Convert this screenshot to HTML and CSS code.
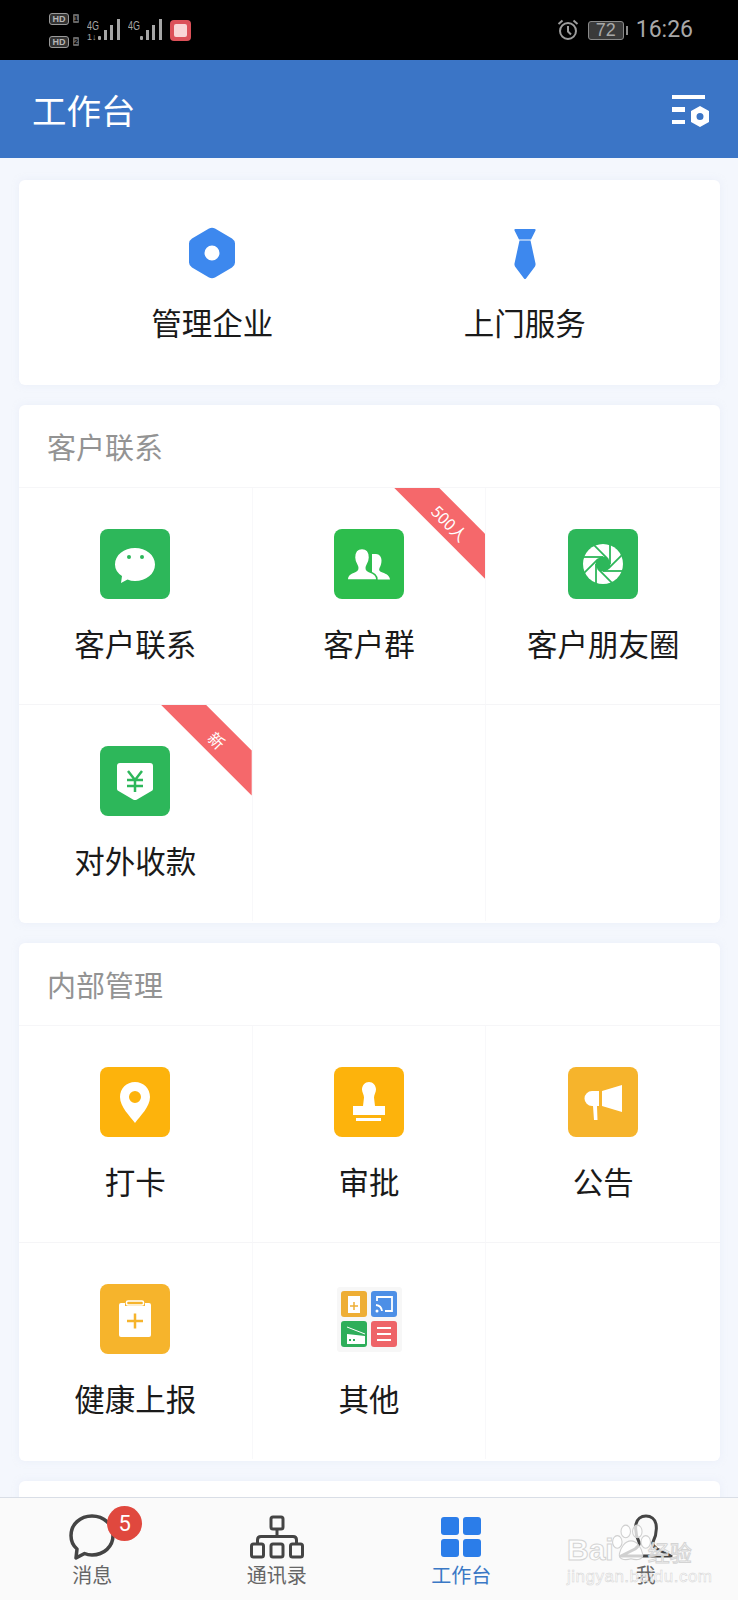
FILE: index.html
```html
<!DOCTYPE html>
<html lang="zh-CN">
<head>
    <meta charset="UTF-8">
    <meta name="viewport" content="width=device-width, initial-scale=1.0">
    <title>工作台</title>
    <link rel="stylesheet" href="styles.css">
</head>
<body>
    <!-- Status bar -->
    <div class="status-bar">
        <div class="status-left">
            <div class="sim-tags">
                <div class="sim-row"><span class="hd">HD</span><span class="sim-no">1</span></div>
                <div class="sim-row"><span class="hd">HD</span><span class="sim-no">2</span></div>
            </div>
            <svg class="signal" width="34" height="22" viewBox="0 0 34 22">
                <text x="0" y="11" class="signal-text" textLength="12" lengthAdjust="spacingAndGlyphs">4G</text>
                <text x="0" y="21" class="signal-sub">1↓</text>
                <rect x="11" y="17" width="3" height="4" rx="1"/>
                <rect x="17" y="11" width="3" height="10"/>
                <rect x="23" y="6" width="3" height="15"/>
                <rect x="30" y="0" width="3" height="21"/>
            </svg>
            <svg class="signal" width="34" height="22" viewBox="0 0 34 22">
                <text x="0" y="11" class="signal-text" textLength="12" lengthAdjust="spacingAndGlyphs">4G</text>
                <rect x="12" y="17" width="3" height="4" rx="1"/>
                <rect x="18" y="11" width="3" height="10"/>
                <rect x="24" y="6" width="3" height="15"/>
                <rect x="31" y="0" width="3" height="21"/>
            </svg>
            <span class="app-dot"><span></span></span>
        </div>
        <div class="status-right">
            <svg width="22" height="22" viewBox="0 0 22 22" fill="none" stroke="#9c9c9c" stroke-width="2">
                <circle cx="11" cy="12" r="8"/>
                <path d="M11 7v5.500l3 3M1.500 5l4-3.500M20.500 5l-4-3.500"/>
            </svg>
            <span class="battery"><span class="battery-body">72</span><span class="battery-cap"></span></span>
            <span class="clock">16:26</span>
        </div>
    </div>

    <!-- Header -->
    <header class="app-header">
        <h1>工作台</h1>
        <svg width="38" height="32" viewBox="0 0 38 32">
            <path fill="#fff" d="M0 0h33v4H0zM0 12h13v5H0zM0 25h13v4H0z"/>
            <path fill="#fff" fill-rule="evenodd" d="M28 11l9 5v11l-9 5-9-5V16zM28 18a3.500 3.500 0 1 0 0 7 3.500 3.500 0 1 0 0-7z"/>
        </svg>
    </header>

    <main class="content">
        <section class="card card-top">
            <div class="top-item">
                <svg width="46" height="52" viewBox="0 0 46 52">
                    <path fill="#3d88ee" fill-rule="evenodd" d="M20 1.500q3-1.500 6 0l17 10q3 2 3 5v19q0 3-3 5l-17 10q-3 1.500-6 0l-17-10q-3-2-3-5v-19q0-3 3-5zM23 18.500a7.500 7.500 0 1 0 0 15 7.500 7.500 0 1 0 0-15z"/>
                </svg>
                <span>管理企业</span>
            </div>
            <div class="top-item">
                <svg width="46" height="52" viewBox="0 0 46 52">
                    <path fill="#3d88ee" d="M13.500 2h19q1.500 0 1 1.500l-4.500 9h-12l-4.500-9q-.5-1.500 1-1.500zM17.500 13.500h11l5 23q.3 1.500-.5 3l-9 12q-1 1-2 0l-9-12q-.8-1.500-.5-3z"/>
                </svg>
                <span>上门服务</span>
            </div>
        </section>

        <section class="card">
            <h2 class="card-title">客户联系</h2>
            <div class="app-grid">
                <div class="app-cell">
                    <span class="app-icon green">
                        <svg viewBox="0 0 70 70">
                            <path fill="#fff" d="M35 19c11 0 20 7 20 16.500S46 52 35 52q-4 0-7.500-1.500L21 54l1-7q-7-4.500-7-11.500C15 26 24 19 35 19z"/>
                            <circle cx="29" cy="28" r="2" fill="#2db75a"/>
                            <circle cx="42" cy="28" r="2" fill="#2db75a"/>
                        </svg>
                    </span>
                    <span class="app-label">客户联系</span>
                </div>
                <div class="app-cell">
                    <span class="ribbon"><em>500人</em></span>
                    <span class="app-icon green-2">
                        <svg viewBox="0 0 70 70">
                            <path fill="#fff" d="M42 25c3.500 0 5.500 3 5.500 6.500 0 3-1 5.500-2 7.500-1 2.500 0 3.500 3 4.500 4 1.500 7 3 7.500 7H38V25z"/>
                            <path fill="#fff" stroke="#2dbd4d" stroke-width="1.500" d="M13 51c0-5 3-6.500 8-8.500 3-1.200 3.500-3.500 2-6-1.500-2.500-2.500-5-2.500-8 0-5 2.500-9 7.500-9s7.500 4 7.500 9c0 3-1 5.500-2.500 8-1.500 2.500-1 4.800 2 6 5 2 8 3.500 8 8.500z"/>
                        </svg>
                    </span>
                    <span class="app-label">客户群</span>
                </div>
                <div class="app-cell">
                    <span class="app-icon green">
                        <svg viewBox="0 0 70 70">
                            <circle cx="35" cy="35" r="20" fill="#fff"/>
                            <g stroke="#2db75a" stroke-width="1.800">
                                <path d="M42 35v-20" transform="rotate(0 35 35)"/>
                                <path d="M42 35v-20" transform="rotate(45 35 35)"/>
                                <path d="M42 35v-20" transform="rotate(90 35 35)"/>
                                <path d="M42 35v-20" transform="rotate(135 35 35)"/>
                                <path d="M42 35v-20" transform="rotate(180 35 35)"/>
                                <path d="M42 35v-20" transform="rotate(225 35 35)"/>
                                <path d="M42 35v-20" transform="rotate(270 35 35)"/>
                                <path d="M42 35v-20" transform="rotate(315 35 35)"/>
                            </g>
                            <circle cx="35" cy="35" r="7.500" fill="#2db75a"/>
                        </svg>
                    </span>
                    <span class="app-label">客户朋友圈</span>
                </div>
                <div class="app-cell">
                    <span class="ribbon"><em>新</em></span>
                    <span class="app-icon green">
                        <svg viewBox="0 0 70 70">
                            <path fill="#fff" d="M20 17h30q3 0 3 3v23q0 1.500-1.500 2L37 53.500q-2 1-4 0L18.500 45q-1.500-.5-1.500-2V20q0-3 3-3z"/>
                            <path fill="none" stroke="#2db75a" stroke-width="2.500" d="M28 25l7 9 7-9M27 34h16M27 40h16M35 34v12"/>
                        </svg>
                    </span>
                    <span class="app-label">对外收款</span>
                </div>
                <div class="app-cell"></div>
                <div class="app-cell"></div>
            </div>
        </section>

        <section class="card">
            <h2 class="card-title">内部管理</h2>
            <div class="app-grid">
                <div class="app-cell">
                    <span class="app-icon amber">
                        <svg viewBox="0 0 70 70">
                            <path fill="#fff" fill-rule="evenodd" d="M35 15c-8.500 0-15 6.500-15 15 0 10 10 19 15 26 5-7 15-16 15-26 0-8.500-6.500-15-15-15zM35 24a6 6 0 1 1 0 12 6 6 0 1 1 0-12z"/>
                        </svg>
                    </span>
                    <span class="app-label">打卡</span>
                </div>
                <div class="app-cell">
                    <span class="app-icon amber">
                        <svg viewBox="0 0 70 70">
                            <path fill="#fff" d="M35 15c4 0 7 3.500 7 7.500 0 3-2 5-2 8l1 8.500h10v9H19v-9h10l1-8.500c0-3-2-5-2-8 0-4 3-7.500 7-7.500zM22 51h25v3H22z"/>
                        </svg>
                    </span>
                    <span class="app-label">审批</span>
                </div>
                <div class="app-cell">
                    <span class="app-icon amber-2">
                        <svg viewBox="0 0 70 70">
                            <path fill="#fff" d="M31 24h-7a7.500 7.500 0 0 0 0 15h7zM34 24l20-6v27l-20-6zM25 39h4l.5 14H26z"/>
                        </svg>
                    </span>
                    <span class="app-label">公告</span>
                </div>
                <div class="app-cell">
                    <span class="app-icon amber-2">
                        <svg viewBox="0 0 70 70">
                            <path fill="#fff" d="M21 19h4v3h20v-3h4q2 0 2 2v30q0 2-2 2H21q-2 0-2-2V21q0-2 2-2z"/>
                            <rect x="26.500" y="17" width="17" height="4" rx="1.500" fill="none" stroke="#fff" stroke-width="1.500"/>
                            <path fill="none" stroke="#f6b42c" stroke-width="2.500" d="M27 37h16M35 29.500v15"/>
                        </svg>
                    </span>
                    <span class="app-label">健康上报</span>
                </div>
                <div class="app-cell">
                    <svg class="app-icon other-icon" viewBox="0 0 70 70">
                        <rect x="3" y="3" width="65" height="65" rx="3" fill="#f7f7f7"/>
                        <rect x="7" y="7" width="26" height="26" rx="3" fill="#eeae35"/>
                        <rect x="37" y="7" width="26" height="26" rx="3" fill="#4d8fe6"/>
                        <rect x="7" y="37" width="26" height="26" rx="3" fill="#2eae5a"/>
                        <rect x="37" y="37" width="26" height="26" rx="3" fill="#ee6468"/>
                        <rect x="14" y="12" width="12" height="17" fill="#fff"/>
                        <path fill="none" stroke="#eeae35" stroke-width="1.500" d="M16 22h8M20 18v8"/>
                        <path fill="none" stroke="#fff" stroke-width="1.800" d="M43 17v-4h15v14h-7M42 21a7 7 0 0 1 6 6"/>
                        <circle cx="43" cy="27" r="1.500" fill="#fff"/>
                        <path fill="#fff" d="M13 50l18 2v8H13z"/>
                        <path fill="none" stroke="#fff" stroke-width="1" d="M13 43l18 7"/>
                        <path fill="#2eae5a" d="M15 55h2v2h-2zM19 55h2v2h-2z"/>
                        <path fill="none" stroke="#fff" stroke-width="2" d="M43 44h14M43 50h14M43 56h14"/>
                    </svg>
                    <span class="app-label">其他</span>
                </div>
                <div class="app-cell"></div>
            </div>
        </section>

        <section class="card card-next"></section>
    </main>

    <!-- Bottom tabs -->
    <nav class="tab-bar">
        <div class="tab">
            <span class="tab-icon">
                <svg width="60" height="46" viewBox="0 0 60 46" fill="none" stroke="#444" stroke-width="3.500" stroke-linejoin="round">
                    <path d="M30 2c12 0 21 8.500 21 19.500S42 41 30 41q-4 0-7.500-1.500L14 44l1-9q-6-5-6-13.500C9 10.500 18 2 30 2z"/>
                </svg>
                <span class="tab-badge">5</span>
            </span>
            <span class="tab-label">消息</span>
        </div>
        <div class="tab">
            <span class="tab-icon">
                <svg width="60" height="46" viewBox="0 0 60 46" fill="none" stroke="#444" stroke-width="3" stroke-linejoin="round">
                    <rect x="24" y="3" width="12" height="12" rx="2"/>
                    <rect x="4.500" y="30" width="12" height="13" rx="2"/>
                    <rect x="24" y="30" width="12" height="13" rx="2"/>
                    <rect x="43.500" y="30" width="12" height="13" rx="2"/>
                    <path d="M30 15v7.500M10.500 30v-4q0-3.500 3.500-3.500h32q3.500 0 3.500 3.500v4"/>
                </svg>
            </span>
            <span class="tab-label">通讯录</span>
        </div>
        <div class="tab tab-active">
            <span class="tab-icon">
                <svg width="60" height="46" viewBox="0 0 60 46" fill="#2b7de9">
                    <rect x="10" y="3" width="18" height="18" rx="3"/>
                    <rect x="32" y="3" width="18" height="18" rx="3"/>
                    <rect x="10" y="25" width="18" height="18" rx="3"/>
                    <rect x="32" y="25" width="18" height="18" rx="3"/>
                </svg>
            </span>
            <span class="tab-label">工作台</span>
        </div>
        <div class="tab">
            <span class="tab-icon">
                <svg width="60" height="46" viewBox="0 0 60 46" fill="none" stroke="#444" stroke-width="3" stroke-linejoin="round">
                    <path d="M23 28c-3-6-4-12-3-18 1-5 5-8 10-8s9 3 10 8c1 6 0 12-3 18-1 3 1 5 4 7l14 7H5l14-7c3-2 5-4 4-7z"/>
                </svg>
            </span>
            <span class="tab-label">我</span>
        </div>
    </nav>

    <!-- Watermark laid over the tabs -->
    <div class="watermark">
        <div class="mark-top">
            <span>Bai</span>
            <svg width="40" height="42" viewBox="0 0 38 36" fill="#fff" fill-opacity=".75" stroke="#cfcfcf">
                <ellipse cx="6" cy="17" rx="4.500" ry="6"/>
                <ellipse cx="14" cy="7" rx="4.500" ry="6"/>
                <ellipse cx="25" cy="7" rx="4.500" ry="6"/>
                <ellipse cx="33" cy="17" rx="4.500" ry="6"/>
                <path d="M19 16c-6 0-10 7-11 12-1 5 4 7 11 5 7 2 12 0 11-5-1-5-5-12-11-12z"/>
            </svg>
            <span class="mark-cn">经验</span>
        </div>
        <div class="mark-url">jingyan.baidu.com</div>
    </div>
</body>
</html>
```
FILE: styles.css
```css
/* General Styles */
* {
    box-sizing: border-box;
}
body {
    margin: 0;
    height: 100vh;
    display: flex;
    flex-direction: column;
    position: relative;
    overflow: hidden;
    background-color: #f4f7fd;
    color: #1a1a1a;
    font-family: "Noto Sans CJK SC", "Liberation Sans", sans-serif;
}

/* Status bar */
.status-bar {
    height: 60px;
    flex: none;
    display: flex;
    justify-content: space-between;
    align-items: center;
    padding: 0 45px 0 49px;
    background: #000;
}
.status-left,
.status-right {
    display: flex;
    align-items: center;
}
.sim-tags {
    display: flex;
    flex-direction: column;
    gap: 11px;
    width: 38px;
}
.sim-row {
    display: flex;
    align-items: center;
    gap: 4px;
}
.hd {
    width: 20px;
    height: 12px;
    border: 1px solid #9a9a9a;
    border-radius: 3px;
    background: #333;
    color: #b5b5b5;
    font: bold 9px/10px "Liberation Sans", sans-serif;
    text-align: center;
}
.sim-no {
    width: 6px;
    height: 9px;
    border-radius: 1px;
    background: #666;
    color: #000;
    font: bold 8px/9px "Liberation Sans", sans-serif;
    text-align: center;
}
.signal {
    fill: #a6a6a6;
}
.signal + .signal {
    margin-left: 7px;
}
.signal-text {
    font: 13px "Liberation Sans", sans-serif;
}
.signal-sub {
    font: 9px "Liberation Sans", sans-serif;
}
.app-dot {
    width: 21px;
    height: 21px;
    margin-left: 8px;
    padding: 4px;
    border-radius: 4px;
    background: #dc5159;
}
.app-dot span {
    display: block;
    height: 100%;
    border-radius: 2px;
    background: #f9d6d6;
}
.status-right {
    color: #a8a8a8;
}
.battery {
    display: flex;
    align-items: center;
    margin-left: 9px;
}
.battery-body {
    width: 36px;
    height: 19px;
    border: 1px solid #8a8a8a;
    border-radius: 3px;
    background: #3a3a3a;
    font: 18px/17px "Liberation Sans", sans-serif;
    text-align: center;
}
.battery-cap {
    width: 2px;
    height: 9px;
    margin-left: 2px;
    background: #8a8a8a;
}
.clock {
    margin-left: 8px;
    font: 23px/30px Roboto, "Liberation Sans", sans-serif;
}

/* Header */
.app-header {
    height: 98px;
    flex: none;
    display: flex;
    justify-content: space-between;
    align-items: center;
    padding: 4px 28px 0 32px;
    background: #3b75c6;
}
.app-header h1 {
    margin: 0 0 4px;
    color: #fff;
    font-size: 34.5px;
    font-weight: 400;
}

/* Cards */
.content {
    flex: 1;
    min-height: 0;
    overflow: hidden;
    padding: 22px 18px 0 19px;
}
.card {
    margin-bottom: 20px;
    border-radius: 6px;
    background: #fff;
    box-shadow: 0 0 6px rgba(226, 232, 245, 0.5);
}
.card-top {
    height: 205px;
    display: grid;
    grid-template-columns: 1fr 1fr;
    padding: 47px 39px 0 37px;
}
.top-item {
    display: flex;
    flex-direction: column;
    align-items: center;
    gap: 21px;
    font-size: 30.5px;
    line-height: 44px;
}
.card-title {
    height: 83px;
    margin: 0;
    padding: 20px 28px 0;
    border-bottom: 1px solid #f6f6f8;
    color: #939393;
    font-size: 29px;
    font-weight: 400;
    line-height: 42px;
}
.card-next {
    height: 60px;
}

/* App grid */
.app-grid {
    display: grid;
    grid-template-columns: repeat(3, 1fr);
    grid-auto-rows: 216.5px;
    padding-bottom: 2px;
}
.app-cell {
    position: relative;
    overflow: hidden;
    display: flex;
    flex-direction: column;
    align-items: center;
    padding-top: 41px;
    border-right: 1px solid #f8f8fa;
    border-bottom: 1px solid #f5f5f7;
}
.app-cell:nth-child(3n) {
    border-right: none;
}
.app-grid .app-cell:nth-last-child(-n+3) {
    border-bottom: none;
}
.app-icon {
    display: block;
    width: 70px;
    height: 70px;
    flex: none;
    border-radius: 8px;
}
.app-icon svg {
    display: block;
}
.green { background: #2db75a; }
.green-2 { background: #2dbd4d; }
.amber { background: #fdb30c; }
.amber-2 { background: #f6b42c; }
.app-label {
    margin-top: 22px;
    font-size: 30.5px;
    line-height: 44px;
}

/* Corner ribbon */
.ribbon {
    position: absolute;
    top: 0;
    right: 0;
    width: 91px;
    height: 91px;
    background: #f5686b;
    clip-path: polygon(0 0, 45px 0, 100% 46px, 100% 100%);
}
.ribbon em {
    position: absolute;
    left: 56px;
    top: 35px;
    transform: translate(-50%, -50%) rotate(45deg);
    color: #fff;
    font-size: 16px;
    font-style: normal;
    line-height: 20px;
    white-space: nowrap;
}

/* Bottom tabs */
.tab-bar {
    height: 103px;
    flex: none;
    display: grid;
    grid-template-columns: repeat(4, 1fr);
    border-top: 1px solid #d9dee6;
    background: #fafafa;
}
.tab {
    display: flex;
    flex-direction: column;
    align-items: center;
    padding-top: 16px;
    color: #666;
}
.tab-icon {
    position: relative;
    display: block;
    height: 46px;
}
.tab-icon svg {
    display: block;
}
.tab-badge {
    position: absolute;
    top: -8px;
    right: -20px;
    width: 35px;
    height: 35px;
    border-radius: 50%;
    background: #e0483e;
    color: #fff;
    font: 22px/35px Roboto, "Liberation Sans", sans-serif;
    text-align: center;
}
.tab-label {
    font-size: 20px;
    line-height: 30px;
}
.tab-active {
    color: #3a78c5;
}

/* Watermark */
.watermark {
    position: absolute;
    left: 567px;
    top: 1524px;
    width: 131px;
    color: rgba(255, 255, 255, 0.75);
    -webkit-text-stroke: 1px #d4d4d4;
    pointer-events: none;
}
.mark-top {
    display: flex;
    align-items: flex-end;
    height: 42px;
    font: bold 30px/32px "Liberation Sans", sans-serif;
}
.mark-top svg {
    flex: none;
    margin: 0 -3px 2px -3px;
}
.mark-cn {
    font: 22px/30px "Noto Sans CJK SC", sans-serif;
}
.mark-url {
    margin-top: 1px;
    font: 17px/20px "Liberation Sans", sans-serif;
    letter-spacing: 0.5px;
    white-space: nowrap;
    -webkit-text-stroke: 0.5px #d4d4d4;
}
```
